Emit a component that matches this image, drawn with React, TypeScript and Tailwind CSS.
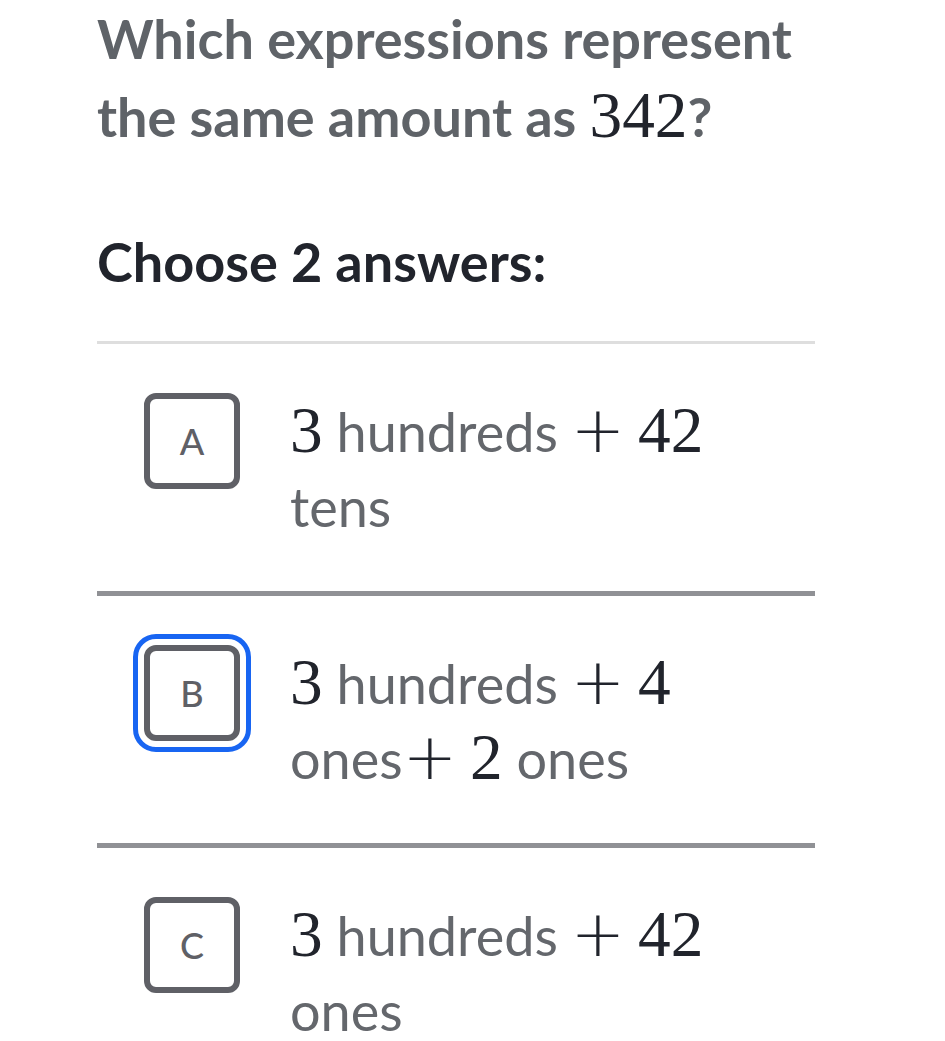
import type { ReactNode } from 'react';

function M({ children }: { children: ReactNode }) {
  return (
    <span className="font-['Liberation_Serif',serif] text-[1.21em] font-normal leading-none text-[#21242c]">
      {children}
    </span>
  );
}

function Plus({ left = true }: { left?: boolean }) {
  return (
    <span
      className={`font-['DejaVu_Sans',sans-serif] text-[1.2em] font-extralight leading-none text-[#21242c] ${
        left ? 'mx-[0.2em]' : 'mr-[0.2em]'
      }`}
    >
      +
    </span>
  );
}

interface Choice {
  letter: string;
  content: ReactNode;
  focused?: boolean;
}

const choices: Choice[] = [
  {
    letter: 'A',
    content: (
      <>
        <M>3</M> hundreds<Plus /><M>42</M> tens
      </>
    ),
  },
  {
    letter: 'B',
    focused: true,
    content: (
      <>
        <M>3</M> hundreds<Plus /><M>4</M> ones<Plus left={false} />
        <M>2</M> ones
      </>
    ),
  },
  {
    letter: 'C',
    content: (
      <>
        <M>3</M> hundreds<Plus /><M>42</M> ones
      </>
    ),
  },
];

export default function App() {
  return (
    <div className="min-h-screen bg-white font-['Lato',sans-serif]">
      <div className="pl-[97px] pr-[130px]">
        <h1 className="text-[54px] font-bold leading-[78px] text-[#5f6368]">
          Which expressions represent the same amount as <M>342</M>?
        </h1>

        <h2 className="mt-[71px] text-[54px] font-bold leading-[70px] text-[#21242c]">
          Choose 2 answers:
        </h2>

        <ul className="mt-[44px] border-t-[3px] border-[#dedede]">
          {choices.map((c, i) => (
            <li
              key={c.letter}
              className={`flex items-start gap-[50px] pl-[47px] pt-[49px] pb-[47px] ${
                i < choices.length - 1 ? 'border-b-[5px] border-[#909195]' : ''
              }`}
            >
              <div
                className={`flex h-[96px] w-[96px] shrink-0 items-center justify-center rounded-[12px] border-[6px] border-[#5f6066] text-[36px] font-medium text-[#5f6066] ${
                  c.focused ? 'outline-[5px] outline-offset-[6px] outline-[#1865f2] outline-solid' : ''
                }`}
              >
                {c.letter}
              </div>
              <div className="w-[440px] pt-[1px] text-[54px] leading-[75px] text-[#64676c]">
                {c.content}
              </div>
            </li>
          ))}
        </ul>
      </div>
    </div>
  );
}
